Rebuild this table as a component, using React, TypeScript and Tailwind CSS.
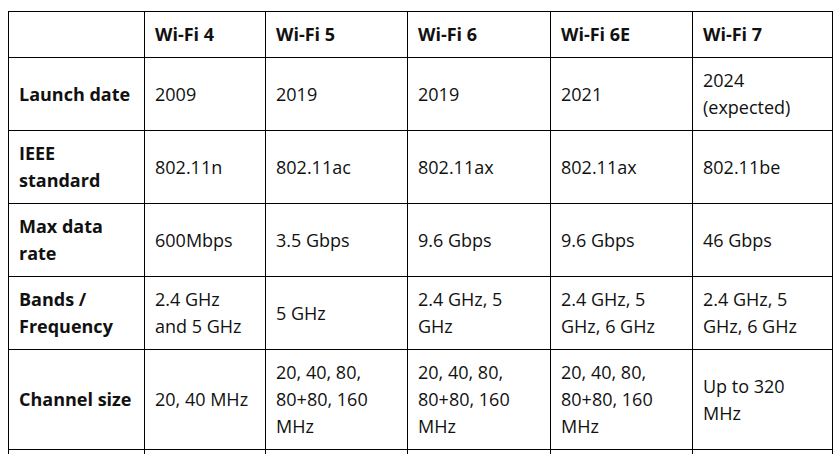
import * as React from "react"

const headers = ["Wi-Fi 4", "Wi-Fi 5", "Wi-Fi 6", "Wi-Fi 6E", "Wi-Fi 7"]

// line breaks follow the original column widths
const rows: { label: string; cells: string[] }[] = [
  { label: "Launch date", cells: ["2009", "2019", "2019", "2021", "2024\n(expected)"] },
  { label: "IEEE\nstandard", cells: ["802.11n", "802.11ac", "802.11ax", "802.11ax", "802.11be"] },
  { label: "Max data\nrate", cells: ["600Mbps", "3.5 Gbps", "9.6 Gbps", "9.6 Gbps", "46 Gbps"] },
  {
    label: "Bands /\nFrequency",
    cells: ["2.4 GHz\nand 5 GHz", "5 GHz", "2.4 GHz, 5\nGHz", "2.4 GHz, 5\nGHz, 6 GHz", "2.4 GHz, 5\nGHz, 6 GHz"],
  },
  {
    label: "Channel size",
    cells: [
      "20, 40 MHz",
      "20, 40, 80,\n80+80, 160\nMHz",
      "20, 40, 80,\n80+80, 160\nMHz",
      "20, 40, 80,\n80+80, 160\nMHz",
      "Up to 320\nMHz",
    ],
  },
]

const cell = "border border-black px-[10px] py-[9px] align-middle text-left whitespace-pre-line"

export default function App() {
  return (
    <div className="h-screen overflow-hidden bg-white pt-[11px] pl-[8px] font-['Open_Sans',sans-serif] text-[18px] leading-[27px] text-[#111]">
      <table className="w-[824px] table-fixed border-collapse">
        <colgroup>
          <col className="w-[136px]" />
          <col className="w-[121px]" />
          <col className="w-[142px]" />
          <col className="w-[143px]" />
          <col className="w-[142px]" />
          <col className="w-[140px]" />
        </colgroup>
        <thead>
          <tr className="h-[46px]">
            <th className={cell}></th>
            {headers.map((h) => (
              <th key={h} className={`${cell} font-bold`}>
                {h}
              </th>
            ))}
          </tr>
        </thead>
        <tbody>
          {rows.map((r) => (
            <tr key={r.label} className="h-[73px]">
              <td className={`${cell} font-bold`}>{r.label}</td>
              {r.cells.map((c, i) => (
                <td key={i} className={cell}>
                  {c}
                </td>
              ))}
            </tr>
          ))}
          <tr className="h-[20px]">
            {Array.from({ length: 6 }).map((_, i) => (
              <td key={i} className="border border-black"></td>
            ))}
          </tr>
        </tbody>
      </table>
    </div>
  )
}
